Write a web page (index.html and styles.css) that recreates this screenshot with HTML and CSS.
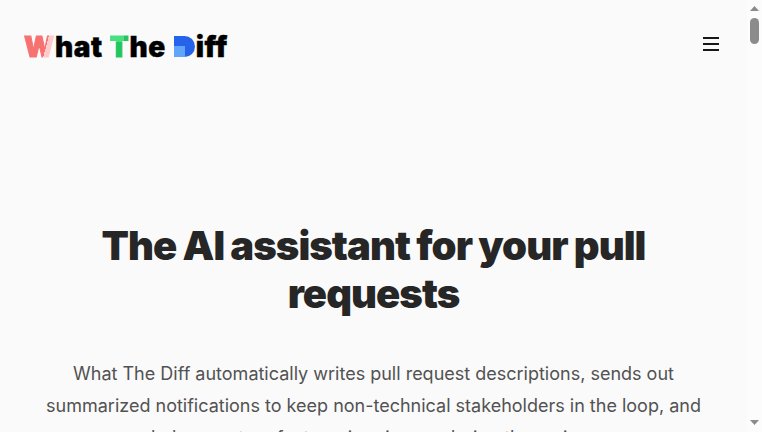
FILE: index.html
```
<!DOCTYPE html>
<html lang="en">
<head>
<meta charset="utf-8">
<title>What The Diff</title>
<link rel="stylesheet" href="styles.css">
</head>
<body>
<div class="window">
  <div class="page">
    <header class="header">
      <a class="logo"><span class="word"><span class="w">W</span>hat</span><span class="word"><span class="t">T</span>he</span><span class="word"><span class="d">D</span>iff</span></a>
      <button class="menu" aria-label="Menu"><svg width="16" height="14" viewBox="0 0 16 14"><path d="M0 1h16M0 7h16M0 13h16" stroke="#171717" stroke-width="2"/></svg></button>
    </header>
    <main class="hero">
      <h1>The AI assistant for your pull<br>requests</h1>
      <p>What The Diff automatically writes pull request descriptions, sends out<br>summarized notifications to keep non-technical stakeholders in the loop, and<br>helps you to refactor minor issues during the review.</p>
    </main>
  </div>
  <div class="scrollbar">
    <svg width="15" height="15" viewBox="0 0 15 15"><path d="M3 11L7.500 6L12 11z" fill="#8b8b8b"/></svg>
    <div class="track"><div class="thumb"></div></div>
    <svg width="15" height="15" viewBox="0 0 15 15"><path d="M3 3L7.500 8L12 3z" fill="#8b8b8b"/></svg>
  </div>
</div>
</body>
</html>
```
FILE: styles.css
```
* { box-sizing: border-box; margin: 0; }
body { font-family: Inter, sans-serif; background: #fafafa; overflow: hidden; }
.window { display: flex; height: 432px; overflow: hidden; }
.page { width: 747px; flex: none; }
.header { display: flex; justify-content: space-between; align-items: center; height: 88px; padding: 0 28px 0 24px; }
.logo { display: flex; gap: 7px; font-size: 28px; font-weight: 900; line-height: 34px; letter-spacing: 0.5px; color: #000; padding-top: 6px; -webkit-text-stroke: 0.4px #000; }
.word { display: flex; }
.w { width: 31px; color: transparent; background: linear-gradient(105deg, #f87171 66%, #fecaca 66%); -webkit-background-clip: text; background-clip: text; -webkit-text-stroke: 1.1px transparent; }
.t { width: 20px; color: transparent; background: linear-gradient(#4ade80, #4ade80) left top / 70% 12px no-repeat #22c55e; -webkit-background-clip: text; background-clip: text; -webkit-text-stroke: 1.1px transparent; }
.d { width: 21px; height: 21px; margin: 6px 1px 0 1px; line-height: 21px; font-size: 16px; color: transparent; -webkit-text-stroke: 0; border-radius: 0 11px 11px 0; background: linear-gradient(#60a5fa, #60a5fa) left bottom / 11px 11px no-repeat #2563eb; }
.menu { display: flex; padding: 0; border: 0; background: none; }
.hero { padding-top: 134px; text-align: center; }
h1 { font-size: 40px; line-height: 48px; font-weight: 900; letter-spacing: -0.95px; word-spacing: -0.8px; color: #262626; white-space: nowrap; }
p { margin-top: 40px; font-size: 18px; line-height: 32px; color: #525252; white-space: nowrap; }
.scrollbar { display: flex; flex-direction: column; width: 15px; height: 432px; background: #fcfcfc; }
.track { flex: 1; padding: 3px 3px 0; }
.thumb { width: 9px; height: 26px; border-radius: 5px; background: #8b8b8b; }
```
